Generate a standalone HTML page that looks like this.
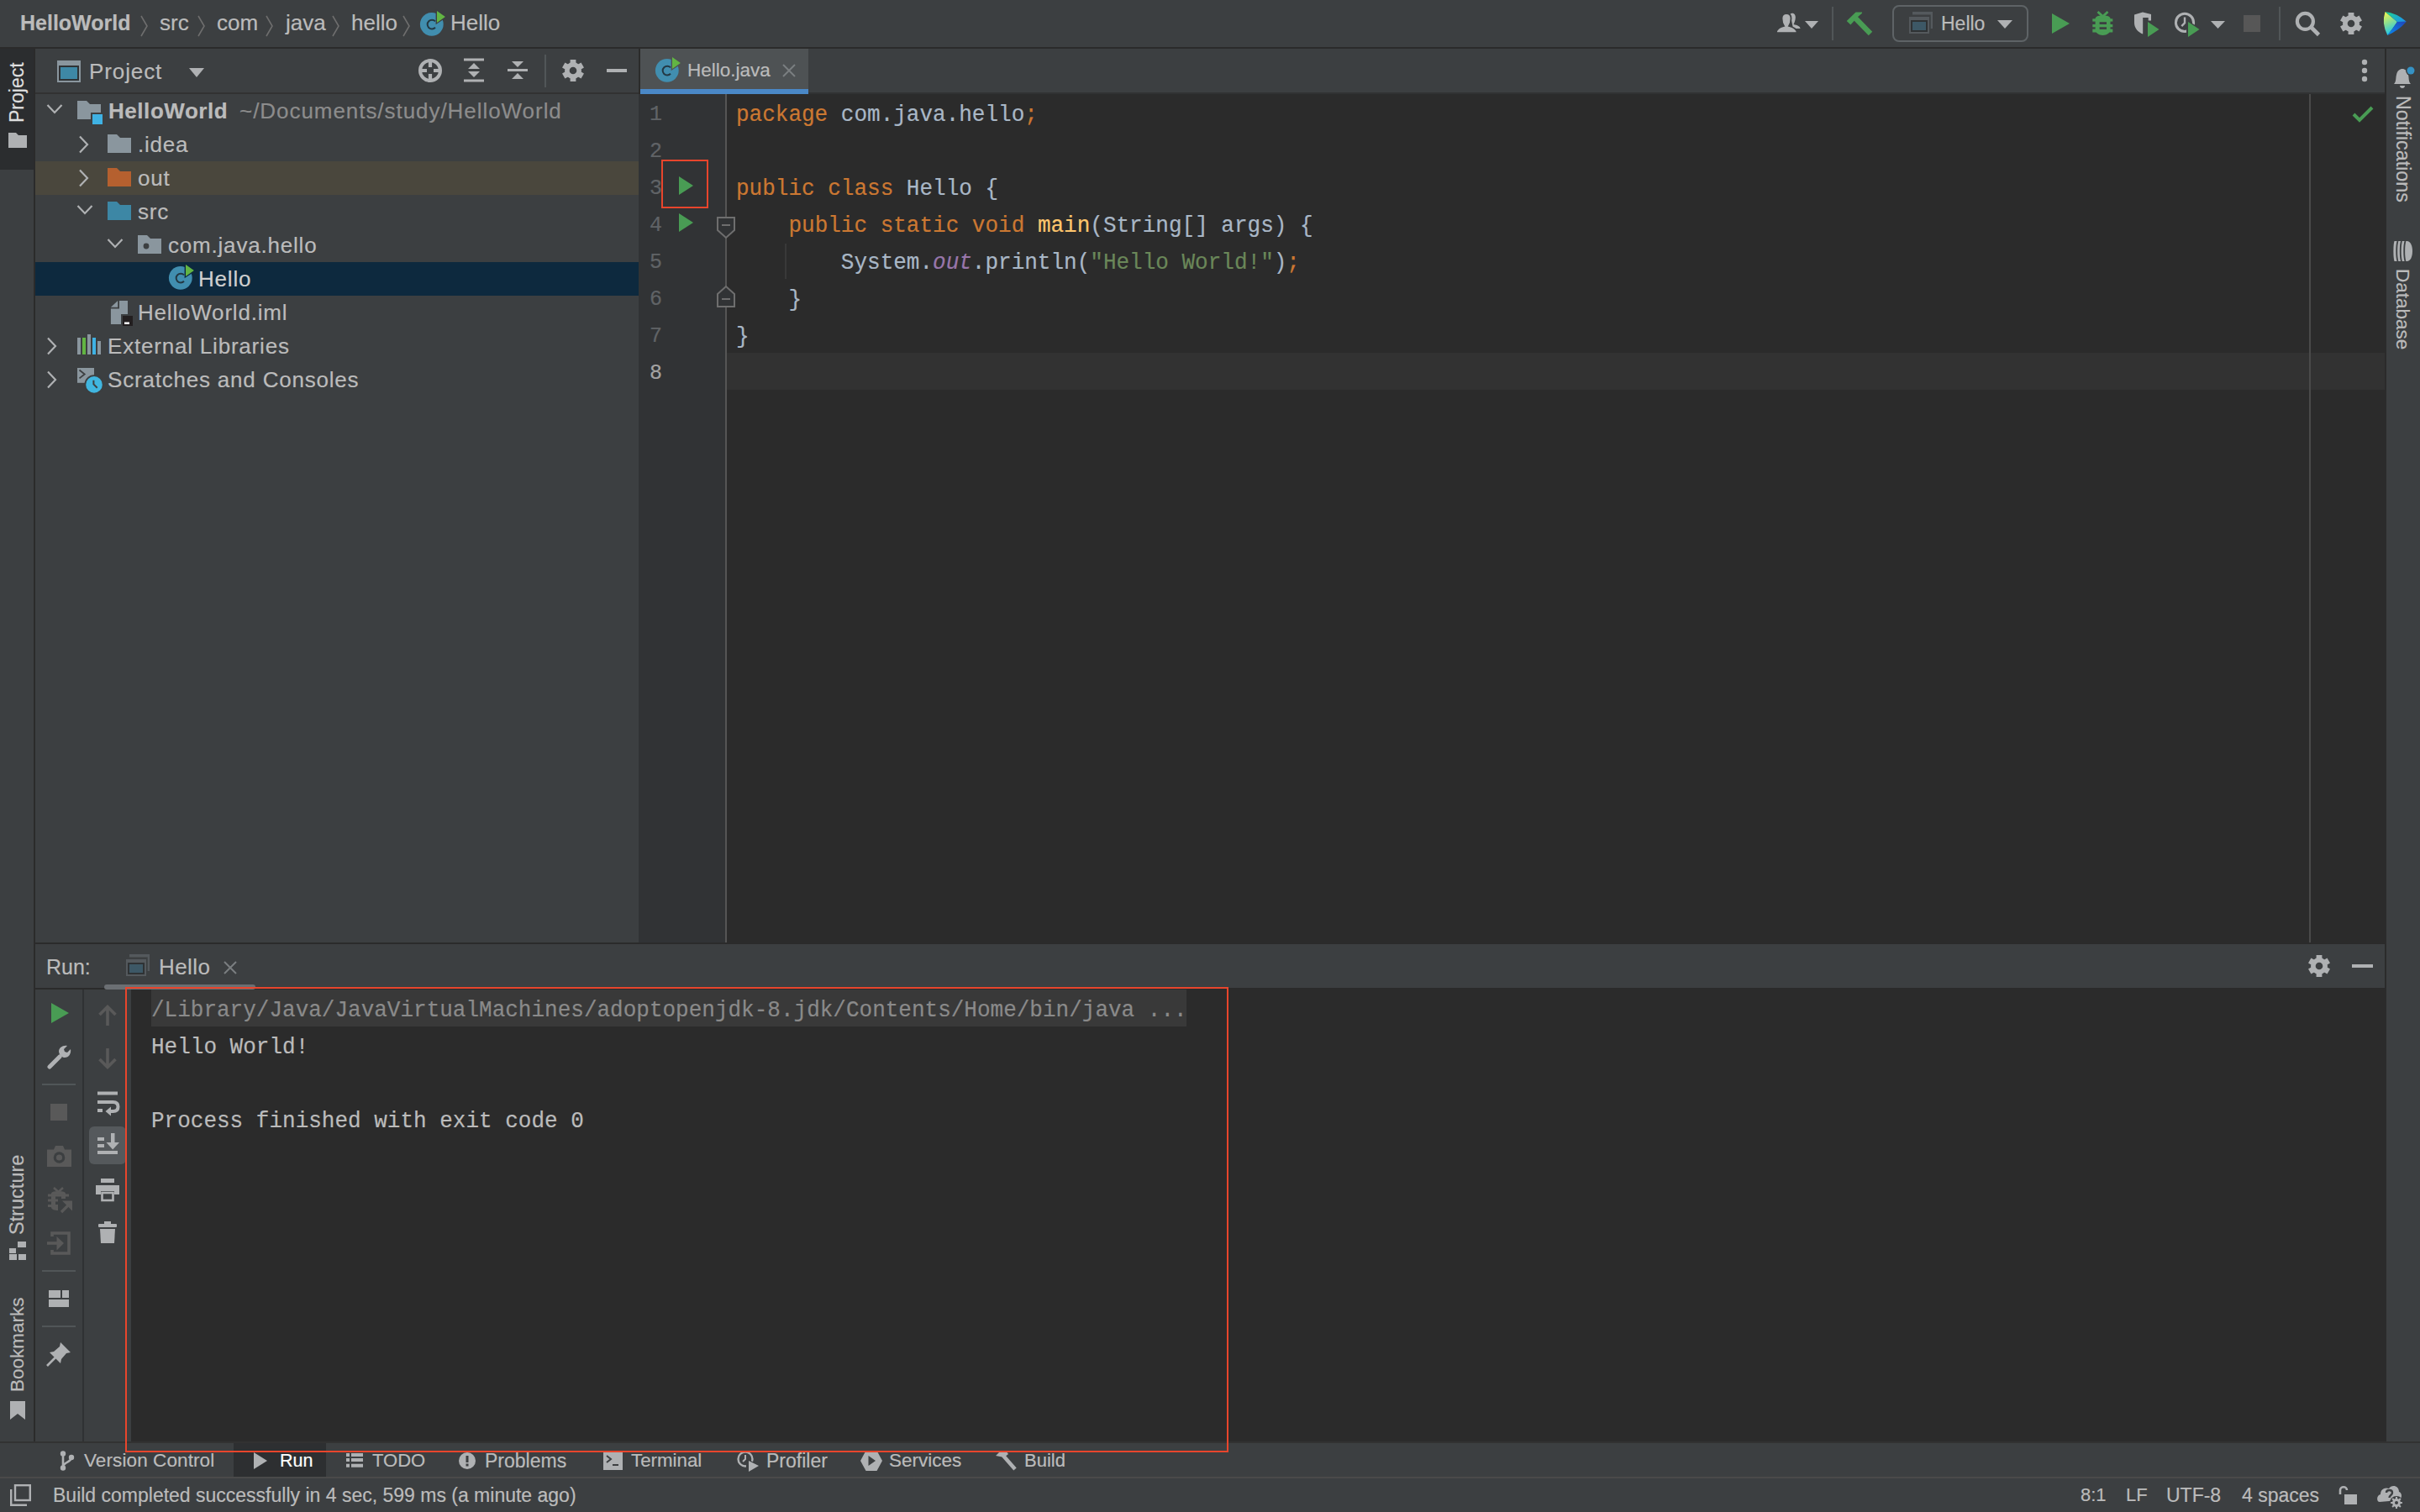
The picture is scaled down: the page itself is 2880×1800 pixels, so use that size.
<!DOCTYPE html>
<html><head><meta charset="utf-8">
<style>
*{margin:0;padding:0;box-sizing:border-box}
html,body{width:2880px;height:1800px;overflow:hidden;background:#3C3F41;font-family:"Liberation Sans",sans-serif;color:#BBBBBB}
.a{position:absolute}
.t{position:absolute;white-space:nowrap;font-size:26px;line-height:40px;-webkit-text-stroke:0.2px currentColor}
.mono{font-family:"Liberation Mono",monospace}
.code{transform:scaleY(1.09);transform-origin:0 28.5px;-webkit-text-stroke:0.2px currentColor}
svg{position:absolute;overflow:visible}
</style></head><body>

<!-- ============ TOP NAV BAR ============ -->
<div class="a" style="left:0;top:0;width:2880px;height:56px;background:#3C3F41"></div>
<div class="a" style="left:0;top:56px;width:2880px;height:2px;background:#2B2B2B"></div>
<div id="nav">
<div class="t" style="left:24px;top:7px;font-size:25px;font-weight:bold;color:#BBBBBB">HelloWorld</div>
<svg style="left:166px;top:18px" width="12" height="26"><path d="M2 1 L9 13 L2 25" fill="none" stroke="#6E6E6E" stroke-width="1.6"/></svg>
<div class="t" style="left:190px;top:7px;font-size:26px">src</div>
<svg style="left:234px;top:18px" width="12" height="26"><path d="M2 1 L9 13 L2 25" fill="none" stroke="#6E6E6E" stroke-width="1.6"/></svg>
<div class="t" style="left:258px;top:7px;font-size:26px">com</div>
<svg style="left:315px;top:18px" width="12" height="26"><path d="M2 1 L9 13 L2 25" fill="none" stroke="#6E6E6E" stroke-width="1.6"/></svg>
<div class="t" style="left:340px;top:7px;font-size:26px">java</div>
<svg style="left:394px;top:18px" width="12" height="26"><path d="M2 1 L9 13 L2 25" fill="none" stroke="#6E6E6E" stroke-width="1.6"/></svg>
<div class="t" style="left:418px;top:7px;font-size:26px">hello</div>
<svg style="left:478px;top:18px" width="12" height="26"><path d="M2 1 L9 13 L2 25" fill="none" stroke="#6E6E6E" stroke-width="1.6"/></svg>
<svg style="left:499px;top:13px" width="32" height="32" viewBox="0 0 32 32"><circle cx="14.8" cy="15.8" r="13.9" fill="#418EAF"/><path d="M19 12.4 A5.4 5.4 0 1 0 19 19.8" fill="none" stroke="#233843" stroke-width="2"/><path d="M19.6 -2.2 L33.4 7 L19.6 16.2 Z" fill="#3C3F41"/><path d="M21 0 L30.9 7 L21 14 Z" fill="#62B543"/></svg>
<div class="t" style="left:536px;top:7px;font-size:26px">Hello</div>
</div>


<!-- person -->
<svg style="left:2110px;top:12px" width="36" height="30" viewBox="0 0 36 30"><path d="M20.5 4.5 C23 2.8 27 4 26.8 9 C26.6 12.5 25.5 15 24.5 17 C29 18 32.5 19.5 32.5 22 H24 Z" fill="#AFB1B3"/><path d="M4 27.2 C4 22 8 20.5 13 19 C11 16 10.5 13 10.5 10 C10.5 6 13 4 16 4 C19 4 21.5 6 21.5 10 C21.5 13 21 16 19 19 C24 20.5 28.5 22 28.5 27.2 Z" fill="#AFB1B3" stroke="#3C3F41" stroke-width="1.8"/></svg>
<svg style="left:2148px;top:25px" width="16" height="10"><path d="M0 0 H16 L8 9 Z" fill="#AFB1B3"/></svg>
<div class="a" style="left:2180px;top:8px;width:2px;height:40px;background:#515658"></div>
<!-- hammer -->
<svg style="left:2195px;top:12px" width="36" height="34" viewBox="0 0 36 34"><path d="M2.7 13 L13.5 2.5 H21 V3.8 L15.5 8.5 L7.4 17.5 Z" fill="#499C54"/><path d="M11.5 8 L31 28" stroke="#499C54" stroke-width="6.2"/></svg>
<!-- combo -->
<div class="a" style="left:2252px;top:6px;width:162px;height:44px;border:2px solid #5E6366;border-radius:8px"></div>
<svg style="left:2272px;top:14px" width="28" height="28" viewBox="0 0 28 28"><rect x="4" y="0" width="24" height="3.5" fill="#54595D"/><rect x="25.7" y="0" width="2.3" height="20" fill="#54595D"/><rect x="0" y="6" width="24" height="20" fill="#54595D"/><rect x="2" y="10" width="20" height="14" fill="#2F3234"/><rect x="4" y="12" width="16" height="10" fill="#3D5866"/></svg>
<div class="t" style="left:2310px;top:8px;font-size:23px;color:#BBBBBB">Hello</div>
<svg style="left:2377px;top:24px" width="18" height="11"><path d="M0 0 H18 L9 10 Z" fill="#AFB1B3"/></svg>
<!-- run -->
<svg style="left:2442px;top:16px" width="22" height="24"><path d="M0 0 L21 12 L0 24 Z" fill="#499C54"/></svg>
<!-- debug -->
<svg style="left:2488px;top:12px" width="30" height="32" viewBox="0 0 30 32"><path d="M8.5 2 L14.5 7.5 L20.5 2" fill="none" stroke="#499C54" stroke-width="2.8"/><path d="M5.6 10.5 C5.6 8 8 6.5 14.5 6.5 C21 6.5 23.5 8 23.5 10.5 V23 C23.5 27 19.5 30 14.5 30 C9.5 30 5.6 27 5.6 23 Z" fill="#499C54"/><rect x="2.3" y="10.3" width="24" height="3.3" fill="#499C54"/><rect x="2.3" y="17" width="24" height="3.3" fill="#499C54"/><rect x="2.3" y="22.6" width="24" height="3.9" fill="#499C54"/><rect x="10.6" y="14.2" width="8.4" height="2.8" fill="#3C3F41"/><rect x="10.6" y="20.3" width="8.4" height="2.6" fill="#3C3F41"/></svg>
<!-- coverage -->
<svg style="left:2538px;top:13px" width="34" height="34" viewBox="0 0 34 34"><path d="M2 4.5 L12 1.5 L22 4 V11.5 H18.7 V8 H12.2 V27.5 C7 25.5 2 21 2 14 Z" fill="#AFB1B3"/><path d="M16 10.5 L34.5 22 L16 33.5 Z" fill="#3C3F41"/><path d="M18 13 L31.5 22 L18 31 Z" fill="#499C54"/></svg>
<!-- profiler -->
<svg style="left:2586px;top:13px" width="34" height="34" viewBox="0 0 34 34"><circle cx="14" cy="13.9" r="10.6" fill="none" stroke="#AFB1B3" stroke-width="3"/><path d="M14 7.5 V14.3 L10.3 18.2" fill="none" stroke="#AFB1B3" stroke-width="2.4"/><path d="M16 10.5 L34.5 22 L16 33.5 Z" fill="#3C3F41"/><path d="M18 13 L31.5 22 L18 31 Z" fill="#499C54"/></svg>
<svg style="left:2631px;top:25px" width="17" height="10"><path d="M0 0 H17 L8.5 9 Z" fill="#AFB1B3"/></svg>
<!-- stop -->
<div class="a" style="left:2670px;top:18px;width:20px;height:20px;background:#575757"></div>
<div class="a" style="left:2712px;top:8px;width:2px;height:40px;background:#515658"></div>
<!-- search -->
<svg style="left:2731px;top:13px" width="32" height="32" viewBox="0 0 32 32"><circle cx="12.4" cy="12.4" r="9.5" fill="none" stroke="#AFB1B3" stroke-width="4.2"/><path d="M19 19 L28.5 28.5" stroke="#AFB1B3" stroke-width="4.6"/></svg>
<svg style="left:2785px;top:15px" width="26" height="26" viewBox="0 0 26 26"><g fill="#AFB1B3"><circle cx="13" cy="13" r="10"/><rect x="9.6" y="0" width="6.8" height="6" transform="rotate(0 13 13)"/><rect x="9.6" y="0" width="6.8" height="6" transform="rotate(60 13 13)"/><rect x="9.6" y="0" width="6.8" height="6" transform="rotate(120 13 13)"/><rect x="9.6" y="0" width="6.8" height="6" transform="rotate(180 13 13)"/><rect x="9.6" y="0" width="6.8" height="6" transform="rotate(240 13 13)"/><rect x="9.6" y="0" width="6.8" height="6" transform="rotate(300 13 13)"/></g><circle cx="13" cy="13" r="4.3" fill="#3C3F41"/></svg>
<!-- jetbrains logo -->
<svg style="left:2835px;top:13px" width="32" height="32" viewBox="0 0 32 32"><defs><linearGradient id="jbL" x1="0" y1="0" x2="0.3" y2="1"><stop offset="0" stop-color="#FCF84A"/><stop offset="0.5" stop-color="#8EE08E"/><stop offset="1" stop-color="#1FC6EA"/></linearGradient><linearGradient id="jbT" x1="0" y1="0" x2="1" y2="0.6"><stop offset="0" stop-color="#21D789"/><stop offset="1" stop-color="#1A98E8"/></linearGradient><linearGradient id="jbB" x1="1" y1="0" x2="0" y2="1"><stop offset="0" stop-color="#2044B8"/><stop offset="1" stop-color="#0A8BF0"/></linearGradient></defs><path d="M3.5 1.1 Q12 8 17.9 13 Q12 22 6.3 28.9 Q-1 15 3.5 1.1 Z" fill="url(#jbL)"/><path d="M3.5 1.1 Q17 2.5 28.8 12.7 L17.9 13 Q12 8 3.5 1.1 Z" fill="url(#jbT)"/><path d="M17.9 13 L28.8 12.7 Q20 23 6.3 28.9 Q12 22 17.9 13 Z" fill="url(#jbB)"/></svg>

<!-- ============ LEFT STRIP ============ -->
<div class="a" style="left:0;top:58px;width:40px;height:1660px;background:#3C3F41"></div>
<div class="a" style="left:0;top:58px;width:40px;height:144px;background:#2B2D2F"></div>
<div class="a" style="left:40px;top:58px;width:2px;height:1660px;background:#2B2B2B"></div>

<!-- ============ PROJECT PANEL ============ -->
<div class="a" style="left:42px;top:58px;width:718px;height:52px;background:#3C3F41"></div>
<div class="a" style="left:42px;top:110px;width:718px;height:2px;background:#323232"></div>
<div class="a" style="left:42px;top:112px;width:718px;height:1010px;background:#3C3F41"></div>
<div class="a" style="left:760px;top:58px;width:2px;height:54px;background:#2B2B2B"></div>


<!-- project header -->
<svg style="left:68px;top:72px" width="28" height="26"><rect x="0" y="0" width="28" height="26" fill="#8A969E"/><rect x="2" y="6" width="24" height="18" fill="#2F3336"/><rect x="4" y="8" width="20" height="14" fill="#3E88A6"/></svg>
<div class="t" style="left:106px;top:65px;letter-spacing:0.9px">Project</div>
<svg style="left:225px;top:81px" width="18" height="12"><path d="M0 0 H18 L9 11 Z" fill="#AFB1B3"/></svg>
<!-- locate -->
<svg style="left:498px;top:70px" width="28" height="28" viewBox="0 0 28 28"><circle cx="14" cy="14" r="12" fill="none" stroke="#AFB1B3" stroke-width="4"/><path d="M14 3 V10 M14 18 V25 M3 14 H10 M18 14 H25" stroke="#AFB1B3" stroke-width="4.2"/></svg>
<!-- expand all -->
<svg style="left:551px;top:69px" width="26" height="29"><path d="M1 2 H25 M1 27 H25" stroke="#AFB1B3" stroke-width="3"/><path d="M13 6 L6 13 H20 Z M13 23 L6 16 H20 Z" fill="#AFB1B3"/></svg>
<!-- collapse all -->
<svg style="left:603px;top:69px" width="26" height="29"><path d="M1 14.5 H25" stroke="#AFB1B3" stroke-width="3"/><path d="M13 11 L6 4 H20 Z M13 18 L6 25 H20 Z" fill="#AFB1B3"/></svg>
<div class="a" style="left:648px;top:65px;width:2px;height:39px;background:#515658"></div>
<svg style="left:669px;top:71px" width="26" height="26" viewBox="0 0 26 26"><g fill="#AFB1B3"><circle cx="13" cy="13" r="10"/><rect x="9.6" y="0" width="6.8" height="6" transform="rotate(0 13 13)"/><rect x="9.6" y="0" width="6.8" height="6" transform="rotate(60 13 13)"/><rect x="9.6" y="0" width="6.8" height="6" transform="rotate(120 13 13)"/><rect x="9.6" y="0" width="6.8" height="6" transform="rotate(180 13 13)"/><rect x="9.6" y="0" width="6.8" height="6" transform="rotate(240 13 13)"/><rect x="9.6" y="0" width="6.8" height="6" transform="rotate(300 13 13)"/></g><circle cx="13" cy="13" r="4.3" fill="#3C3F41"/></svg>
<div class="a" style="left:722px;top:82px;width:24px;height:4px;background:#AFB1B3"></div>

<!-- tree rows -->
<div class="a" style="left:42px;top:192px;width:718px;height:40px;background:#4A473D"></div>
<div class="a" style="left:42px;top:312px;width:718px;height:40px;background:#0D293E"></div>

<svg style="left:55px;top:123px" width="20" height="14"><path d="M1.5 2 L10 11 L18.5 2" fill="none" stroke="#AFB1B3" stroke-width="2.2"/></svg>
<svg style="left:92px;top:120px" width="32" height="30"><path d="M0 0 H11 L15 4 H28 V22 H0 Z" fill="#8A969E"/><rect x="16" y="14" width="16" height="16" fill="#3C3F41"/><rect x="18" y="16" width="12" height="12" fill="#3FB2E4"/></svg>
<div class="t" style="left:129px;top:112px;font-weight:bold;font-size:26px;letter-spacing:0.55px">HelloWorld</div>
<div class="t" style="left:285px;top:112px;color:#8C8C8C;letter-spacing:0.95px">~/Documents/study/HelloWorld</div>

<svg style="left:93px;top:161px" width="14" height="22"><path d="M2 1.5 L11 11 L2 20.5" fill="none" stroke="#AFB1B3" stroke-width="2.2"/></svg>
<svg style="left:128px;top:160px" width="28" height="22"><path d="M0 0 H11 L15 4 H28 V22 H0 Z" fill="#8A969E"/></svg>
<div class="t" style="left:164px;top:152px;letter-spacing:0.8px">.idea</div>

<svg style="left:93px;top:201px" width="14" height="22"><path d="M2 1.5 L11 11 L2 20.5" fill="none" stroke="#AFB1B3" stroke-width="2.2"/></svg>
<svg style="left:128px;top:200px" width="28" height="22"><path d="M0 0 H11 L15 4 H28 V22 H0 Z" fill="#B5602F"/></svg>
<div class="t" style="left:164px;top:192px;letter-spacing:0.8px">out</div>

<svg style="left:91px;top:243px" width="20" height="14"><path d="M1.5 2 L10 11 L18.5 2" fill="none" stroke="#AFB1B3" stroke-width="2.2"/></svg>
<svg style="left:128px;top:240px" width="28" height="22"><path d="M0 0 H11 L15 4 H28 V22 H0 Z" fill="#3D87A5"/></svg>
<div class="t" style="left:164px;top:232px;letter-spacing:0.8px">src</div>

<svg style="left:127px;top:283px" width="20" height="14"><path d="M1.5 2 L10 11 L18.5 2" fill="none" stroke="#AFB1B3" stroke-width="2.2"/></svg>
<svg style="left:164px;top:280px" width="28" height="22"><path d="M0 0 H11 L15 4 H28 V22 H0 Z" fill="#8A969E"/><circle cx="10" cy="13" r="3.4" fill="#3C3F41"/></svg>
<div class="t" style="left:200px;top:272px;letter-spacing:0.8px">com.java.hello</div>

<svg style="left:200px;top:315px" width="32" height="32" viewBox="0 0 32 32"><circle cx="14.8" cy="15.8" r="13.9" fill="#418EAF"/><path d="M19 12.4 A5.4 5.4 0 1 0 19 19.8" fill="none" stroke="#233843" stroke-width="2"/><path d="M19.6 -2.2 L33.4 7 L19.6 16.2 Z" fill="#0D293E"/><path d="M21 0 L30.9 7 L21 14 Z" fill="#62B543"/></svg>
<div class="t" style="left:236px;top:312px;letter-spacing:0.8px;color:#CFCFCF">Hello</div>

<svg style="left:131px;top:357px" width="28" height="32" viewBox="0 0 28 32"><path d="M11 0.9 H21 V17 H13 V29 H0.9 V10.4 H11 Z" fill="#8A969E"/><path d="M0.9 8.7 L9.2 0.9 V8.7 Z" fill="#8A969E"/><rect x="15" y="19" width="12" height="12" fill="#231F20"/><rect x="17" y="26.5" width="6" height="2.5" fill="#FFFFFF"/></svg>
<div class="t" style="left:164px;top:352px;letter-spacing:0.8px">HelloWorld.iml</div>

<svg style="left:55px;top:401px" width="14" height="22"><path d="M2 1.5 L11 11 L2 20.5" fill="none" stroke="#AFB1B3" stroke-width="2.2"/></svg>
<svg style="left:92px;top:398px" width="28" height="24"><rect x="0" y="4" width="4" height="20" fill="#8A969E"/><rect x="6" y="4" width="4" height="20" fill="#62B543"/><rect x="12" y="0" width="4" height="24" fill="#8A969E"/><rect x="18" y="4" width="4" height="20" fill="#3FB2E4"/><rect x="24" y="8" width="4" height="16" fill="#8A969E"/></svg>
<div class="t" style="left:128px;top:392px;letter-spacing:0.8px">External Libraries</div>

<svg style="left:55px;top:441px" width="14" height="22"><path d="M2 1.5 L11 11 L2 20.5" fill="none" stroke="#AFB1B3" stroke-width="2.2"/></svg>
<svg style="left:92px;top:438px" width="32" height="32" viewBox="0 0 32 32"><rect x="0" y="0" width="20" height="17.8" fill="#8A969E"/><path d="M2.5 2.5 L8.7 7.5 L2.5 12.4" fill="none" stroke="#3C3F41" stroke-width="1.8"/><circle cx="20" cy="19.9" r="11.6" fill="#3C3F41"/><circle cx="20" cy="19.9" r="9.8" fill="#40B6E0"/><path d="M19.4 14.8 V19.4 L23.7 23.7" fill="none" stroke="#3C3F41" stroke-width="2"/></svg>
<div class="t" style="left:128px;top:432px;letter-spacing:0.8px">Scratches and Consoles</div>

<!-- ============ EDITOR ============ -->
<div class="a" style="left:762px;top:58px;width:2076px;height:54px;background:#3C3F41"></div>
<div class="a" style="left:760px;top:112px;width:103px;height:1010px;background:#313335"></div>
<div class="a" style="left:863px;top:112px;width:2px;height:1010px;background:#555555"></div>
<div class="a" style="left:865px;top:112px;width:1973px;height:1010px;background:#2B2B2B"></div>


<!-- tab -->
<div class="a" style="left:762px;top:58px;width:200px;height:48px;background:#4E5254"></div>
<div class="a" style="left:762px;top:106px;width:200px;height:6px;background:#4A88C7"></div>
<div class="a" style="left:962px;top:110px;width:1876px;height:2px;background:#313233"></div>
<svg style="left:779px;top:68px" width="32" height="32" viewBox="0 0 32 32"><circle cx="14.8" cy="15.8" r="13.9" fill="#418EAF"/><path d="M19 12.4 A5.4 5.4 0 1 0 19 19.8" fill="none" stroke="#233843" stroke-width="2"/><path d="M19.6 -2.2 L33.4 7 L19.6 16.2 Z" fill="#4E5254"/><path d="M21 0 L30.9 7 L21 14 Z" fill="#62B543"/></svg>
<div class="t" style="left:818px;top:64px;font-size:22.5px;color:#BBBBBB">Hello.java</div>
<svg style="left:931px;top:76px" width="16" height="16"><path d="M1 1 L15 15 M15 1 L1 15" stroke="#7A7E80" stroke-width="2"/></svg>
<!-- 3 dots -->
<svg style="left:2808px;top:70px" width="12" height="28"><circle cx="6" cy="4" r="3.2" fill="#AFB1B3"/><circle cx="6" cy="14" r="3.2" fill="#AFB1B3"/><circle cx="6" cy="24" r="3.2" fill="#AFB1B3"/></svg>
<!-- current line -->
<div class="a" style="left:865px;top:420px;width:1973px;height:44px;background:#323232"></div>
<!-- right margin -->
<div class="a" style="left:2748px;top:112px;width:2px;height:1010px;background:#4A4A4A"></div>
<!-- check -->
<svg style="left:2799px;top:126px" width="26" height="20"><path d="M2 10 L9 17 L24 2" fill="none" stroke="#499C54" stroke-width="4"/></svg>
<!-- line numbers -->
<div class="t mono" style="left:773px;top:114px;width:20px;height:44px;line-height:46px;font-size:25px;color:#606366;text-align:left">1</div>
<div class="t mono" style="left:773px;top:158px;width:20px;height:44px;line-height:46px;font-size:25px;color:#606366;text-align:left">2</div>
<div class="t mono" style="left:773px;top:202px;width:20px;height:44px;line-height:46px;font-size:25px;color:#606366;text-align:left">3</div>
<div class="t mono" style="left:773px;top:246px;width:20px;height:44px;line-height:46px;font-size:25px;color:#606366;text-align:left">4</div>
<div class="t mono" style="left:773px;top:290px;width:20px;height:44px;line-height:46px;font-size:25px;color:#606366;text-align:left">5</div>
<div class="t mono" style="left:773px;top:334px;width:20px;height:44px;line-height:46px;font-size:25px;color:#606366;text-align:left">6</div>
<div class="t mono" style="left:773px;top:378px;width:20px;height:44px;line-height:46px;font-size:25px;color:#606366;text-align:left">7</div>
<div class="t mono" style="left:773px;top:422px;width:20px;height:44px;line-height:46px;font-size:25px;color:#A4A3A3;text-align:left">8</div>

<!-- gutter run icons -->
<svg style="left:808px;top:210px" width="18" height="22"><path d="M0 0 L17 11 L0 22 Z" fill="#499C54"/></svg>
<svg style="left:808px;top:254px" width="18" height="22"><path d="M0 0 L17 11 L0 22 Z" fill="#499C54"/></svg>
<div class="a" style="left:787px;top:190px;width:56px;height:58px;border:2px solid #E8452C"></div>
<!-- fold markers -->
<svg style="left:853px;top:258px" width="22" height="26"><path d="M1 1 H21 V16 L11 25 L1 16 Z" fill="#313335" stroke="#6E6E6E" stroke-width="2"/><path d="M6 10 H16" stroke="#6E6E6E" stroke-width="2"/></svg>
<svg style="left:853px;top:340px" width="22" height="26"><path d="M1 25 H21 V10 L11 1 L1 10 Z" fill="#313335" stroke="#6E6E6E" stroke-width="2"/><path d="M6 16 H16" stroke="#6E6E6E" stroke-width="2"/></svg>
<!-- indent guide -->
<div class="a" style="left:934px;top:290px;width:2px;height:42px;background:#393939"></div>
<!-- code -->
<div class="t mono code" style="left:876px;top:115px;height:44px;line-height:44px;font-size:26px;color:#A9B7C6;white-space:pre"><span style="color:#CC7832">package</span> <span style="color:#A9B7C6">com.java.hello</span><span style="color:#CC7832">;</span></div>
<div class="t mono code" style="left:876px;top:159px;height:44px;line-height:44px;font-size:26px;color:#A9B7C6;white-space:pre"></div>
<div class="t mono code" style="left:876px;top:203px;height:44px;line-height:44px;font-size:26px;color:#A9B7C6;white-space:pre"><span style="color:#CC7832">public class</span> <span style="color:#A9B7C6">Hello {</span></div>
<div class="t mono code" style="left:876px;top:247px;height:44px;line-height:44px;font-size:26px;color:#A9B7C6;white-space:pre">    <span style="color:#CC7832">public static void</span> <span style="color:#FFC66D">main</span><span style="color:#A9B7C6">(String[] args) {</span></div>
<div class="t mono code" style="left:876px;top:291px;height:44px;line-height:44px;font-size:26px;color:#A9B7C6;white-space:pre">        <span style="color:#A9B7C6">System.</span><span style="color:#9876AA;font-style:italic">out</span><span style="color:#A9B7C6">.println(</span><span style="color:#6A8759">"Hello World!"</span><span style="color:#A9B7C6">)</span><span style="color:#CC7832">;</span></div>
<div class="t mono code" style="left:876px;top:335px;height:44px;line-height:44px;font-size:26px;color:#A9B7C6;white-space:pre">    <span style="color:#A9B7C6">}</span></div>
<div class="t mono code" style="left:876px;top:379px;height:44px;line-height:44px;font-size:26px;color:#A9B7C6;white-space:pre"><span style="color:#A9B7C6">}</span></div>
<div class="t mono code" style="left:876px;top:423px;height:44px;line-height:44px;font-size:26px;color:#A9B7C6;white-space:pre"></div>


<!-- ============ RIGHT STRIP ============ -->
<div class="a" style="left:2838px;top:58px;width:2px;height:1660px;background:#2B2B2B"></div>
<div class="a" style="left:2840px;top:58px;width:40px;height:1660px;background:#3C3F41"></div>

<!-- ============ RUN PANEL ============ -->
<div class="a" style="left:42px;top:1122px;width:2796px;height:2px;background:#2B2B2B"></div>
<div class="a" style="left:42px;top:1124px;width:2796px;height:52px;background:#3C3F41"></div>
<div class="a" style="left:42px;top:1176px;width:2796px;height:2px;background:#2B2B2B"></div>
<div class="a" style="left:42px;top:1178px;width:56px;height:538px;background:#3C3F41"></div>
<div class="a" style="left:98px;top:1178px;width:2px;height:538px;background:#2F3133"></div>
<div class="a" style="left:100px;top:1178px;width:56px;height:538px;background:#3C3F41"></div>
<div class="a" style="left:156px;top:1178px;width:2682px;height:538px;background:#2B2B2B"></div>

<!-- ============ BOTTOM BARS ============ -->
<div class="a" style="left:0;top:1716px;width:2880px;height:2px;background:#323232"></div>
<div class="a" style="left:0;top:1718px;width:2880px;height:40px;background:#3C3F41"></div>
<div class="a" style="left:0;top:1758px;width:2880px;height:2px;background:#4A4A4A"></div>
<div class="a" style="left:0;top:1760px;width:2880px;height:40px;background:#3C3F41"></div>


<!-- left strip content -->
<div class="t" style="left:9px;top:146px;font-size:23px;line-height:23px;color:#DFDFDF;transform:rotate(-90deg);transform-origin:0 0">Project</div>
<svg style="left:10px;top:158px" width="22" height="18"><path d="M0 0 H9 L12 3 H22 V18 H0 Z" fill="#AFB1B3"/></svg>
<div class="t" style="left:9px;top:1470px;font-size:23.5px;line-height:23px;color:#BBBBBB;transform:rotate(-90deg);transform-origin:0 0">Structure</div>
<svg style="left:11px;top:1478px" width="20" height="22"><rect x="10" y="0" width="10" height="7" fill="#AFB1B3"/><rect x="0" y="8" width="8" height="6" fill="#AFB1B3"/><rect x="0" y="15" width="9" height="7" fill="#AFB1B3"/><rect x="11" y="15" width="9" height="7" fill="#AFB1B3"/></svg>
<div class="t" style="left:9px;top:1657px;font-size:22.5px;line-height:23px;color:#BBBBBB;transform:rotate(-90deg);transform-origin:0 0">Bookmarks</div>
<svg style="left:12px;top:1668px" width="18" height="22"><path d="M0 0 H18 V22 L9 15 L0 22 Z" fill="#AFB1B3"/></svg>

<!-- right strip content -->
<svg style="left:2846px;top:78px" width="30" height="30" viewBox="0 0 30 30"><path d="M3 22 C6 19 5 14 6 11 C7 6 10 4 13 4 C16 4 19 6 20 11 C21 14 20 19 23 22 Z" fill="#AFB1B3"/><path d="M10 24 C10 28 16 28 16 24 Z" fill="#AFB1B3"/><circle cx="23" cy="6" r="6" fill="#3C3F41"/><circle cx="23" cy="6" r="4.5" fill="#3592C4"/></svg>
<div class="t" style="left:2870.5px;top:114px;font-size:23.3px;line-height:23px;color:#BBBBBB;transform:rotate(90deg);transform-origin:0 0">Notifications</div>
<svg style="left:2848px;top:287px" width="23" height="24" viewBox="0 0 23 24"><path d="M1.5 0 H16.5 C20.5 0 23 5 23 12 C23 19 20.5 24 16.5 24 H1.5 C0 20 0 4 1.5 0 Z" fill="#AFB1B3"/><path d="M5.5 0 C3.8 5 3.8 19 5.5 24 M10 0 C8.3 5 8.3 19 10 24 M14.5 0 C12.8 5 12.8 19 14.5 24" fill="none" stroke="#3C3F41" stroke-width="1.8"/></svg>
<div class="t" style="left:2870.5px;top:320px;font-size:22.5px;line-height:23px;color:#BBBBBB;transform:rotate(90deg);transform-origin:0 0">Database</div>

<!-- run header -->
<div class="t" style="left:55px;top:1131px;font-size:25px;color:#BBBBBB">Run:</div>
<svg style="left:150px;top:1136px" width="28" height="28" viewBox="0 0 28 28"><rect x="4" y="0" width="24" height="3.5" fill="#54595D"/><rect x="25.7" y="0" width="2.3" height="20" fill="#54595D"/><rect x="0" y="6" width="24" height="20" fill="#54595D"/><rect x="2" y="10" width="20" height="14" fill="#2F3234"/><rect x="4" y="12" width="16" height="10" fill="#3D5866"/></svg>
<div class="t" style="left:189px;top:1131px;font-size:26px;letter-spacing:0.4px;color:#BBBBBB">Hello</div>
<svg style="left:266px;top:1144px" width="16" height="16"><path d="M1 1 L15 15 M15 1 L1 15" stroke="#7A7E80" stroke-width="2"/></svg>
<div class="a" style="left:124px;top:1172px;width:180px;height:6px;border-radius:3px;background:#6B6F73"></div>
<svg style="left:2747px;top:1137px" width="26" height="26" viewBox="0 0 26 26"><g fill="#AFB1B3"><circle cx="13" cy="13" r="10"/><rect x="9.6" y="0" width="6.8" height="6" transform="rotate(0 13 13)"/><rect x="9.6" y="0" width="6.8" height="6" transform="rotate(60 13 13)"/><rect x="9.6" y="0" width="6.8" height="6" transform="rotate(120 13 13)"/><rect x="9.6" y="0" width="6.8" height="6" transform="rotate(180 13 13)"/><rect x="9.6" y="0" width="6.8" height="6" transform="rotate(240 13 13)"/><rect x="9.6" y="0" width="6.8" height="6" transform="rotate(300 13 13)"/></g><circle cx="13" cy="13" r="4.3" fill="#3C3F41"/></svg>
<div class="a" style="left:2799px;top:1148px;width:25px;height:4px;background:#AFB1B3"></div>

<!-- console -->
<div class="a" style="left:180px;top:1178px;width:1232px;height:44px;background:#393939"></div>
<div class="t mono code" style="left:180px;top:1181px;line-height:44px;font-size:26px;color:#8A8A8A">/Library/Java/JavaVirtualMachines/adoptopenjdk-8.jdk/Contents/Home/bin/java ...</div>
<div class="t mono code" style="left:180px;top:1225px;line-height:44px;font-size:26px;color:#BBBBBB">Hello World!</div>
<div class="t mono code" style="left:180px;top:1313px;line-height:44px;font-size:26px;color:#BBBBBB">Process finished with exit code 0</div>


<!-- run toolbar col1 -->
<svg style="left:61px;top:1194px" width="22" height="24"><path d="M0 0 L21 12 L0 24 Z" fill="#499C54"/></svg>
<svg style="left:56px;top:1243px" width="30" height="30" viewBox="0 0 30 30"><path d="M3 27 L15 15" stroke="#AFB1B3" stroke-width="5" stroke-linecap="round"/><path d="M14 9 C14 4 19 1 24 2 L20 6 L21 9 L24 10 L28 6 C29 11 26 16 21 16 C18 16 15 14 14 9 Z" fill="#AFB1B3"/></svg>
<div class="a" style="left:50px;top:1290px;width:40px;height:2px;background:#515658"></div>
<div class="a" style="left:60px;top:1314px;width:20px;height:20px;background:#595959"></div>
<svg style="left:56px;top:1364px" width="29" height="25" viewBox="0 0 29 25"><path d="M0 4.5 H8 L10 0 H19 L21 4.5 H29 V25 H0 Z" fill="#595959"/><circle cx="14.5" cy="14" r="6.8" fill="#3C3F41"/><circle cx="14.5" cy="14" r="3.6" fill="#595959"/></svg>
<svg style="left:57px;top:1413px" width="30" height="32" viewBox="0 0 30 32"><path d="M7 1 L12.5 6 L18 1" fill="none" stroke="#595959" stroke-width="2.6"/><path d="M4 8 C4 6 7 5 12.5 5 C18 5 21 6 21 8 V24 C21 27 17 28 12.5 28 C8 28 4 27 4 24 Z" fill="#595959"/><rect x="0" y="8.5" width="25" height="3" fill="#595959"/><rect x="0" y="14.5" width="25" height="3" fill="#595959"/><rect x="0" y="21" width="25" height="3" fill="#595959"/><rect x="9" y="11.5" width="7" height="3" fill="#3C3F41"/><rect x="9" y="17.5" width="7" height="3.5" fill="#3C3F41"/><path d="M12 14 H30 V32 H12 Z" fill="#3C3F41"/><path d="M16 30 L25 21" stroke="#595959" stroke-width="3.2"/><path d="M17 16.5 H29 V28.5 Z" fill="#595959"/></svg>
<svg style="left:56px;top:1466px" width="29" height="29" viewBox="0 0 29 29"><path d="M6 6 V2 H26 V26 H6 V22" fill="none" stroke="#595959" stroke-width="3.6"/><path d="M0 14 H13" stroke="#595959" stroke-width="3.6"/><path d="M11.5 6 L20 14 L11.5 22.5 Z" fill="#595959"/></svg>
<div class="a" style="left:50px;top:1512px;width:40px;height:2px;background:#515658"></div>
<svg style="left:58px;top:1536px" width="24" height="20"><rect x="0" y="0" width="14" height="9" fill="#AFB1B3"/><rect x="16" y="0" width="8" height="9" fill="#AFB1B3"/><rect x="0" y="11" width="24" height="9" fill="#AFB1B3"/></svg>
<div class="a" style="left:50px;top:1578px;width:40px;height:2px;background:#515658"></div>
<svg style="left:55px;top:1597px" width="30" height="30" viewBox="0 0 30 30"><path d="M1 29 L11 19" stroke="#AFB1B3" stroke-width="2.6"/><path d="M17 1 L29 13 L24 14 L18 21 L17 26 L4 13 L9 12 L16 6 Z" fill="#AFB1B3"/></svg>

<!-- run toolbar col2 -->
<svg style="left:117px;top:1196px" width="22" height="26" viewBox="0 0 22 26"><path d="M11 25 V3 M1.5 12 L11 2.5 L20.5 12" fill="none" stroke="#595959" stroke-width="3.6"/></svg>
<svg style="left:117px;top:1248px" width="22" height="26" viewBox="0 0 22 26"><path d="M11 0 V22 M1.5 13 L11 22.5 L20.5 13" fill="none" stroke="#595959" stroke-width="3.6"/></svg>
<svg style="left:115px;top:1299px" width="30" height="30" viewBox="0 0 30 30"><path d="M1 2.5 H25" stroke="#AFB1B3" stroke-width="4"/><path d="M1 13 H19.5 C24 13 25.5 15.5 25.5 18.5 C25.5 21.5 24 24 19.5 24 H15" fill="none" stroke="#AFB1B3" stroke-width="4"/><path d="M1 23 H7" stroke="#AFB1B3" stroke-width="4"/><path d="M17 18.5 L10.5 24 L17 29.5 Z" fill="#AFB1B3"/></svg>
<div class="a" style="left:106px;top:1341px;width:44px;height:45px;border-radius:6px;background:#55595C"></div>
<svg style="left:116px;top:1349px" width="26" height="26" viewBox="0 0 26 26"><path d="M0 7 H8 M0 15 H8 M0 23 H24" fill="none" stroke="#AFB1B3" stroke-width="4"/><rect x="16" y="0" width="4.5" height="12" fill="#AFB1B3"/><path d="M10.5 11 H26 L18.2 19.5 Z" fill="#AFB1B3"/></svg>
<svg style="left:114px;top:1403px" width="28" height="27" viewBox="0 0 28 27"><rect x="6" y="0" width="16" height="5" fill="#AFB1B3"/><path d="M0 8 H28 V19 H22 V15 H6 V19 H0 Z" fill="#AFB1B3"/><rect x="7.5" y="17" width="13" height="9" fill="none" stroke="#AFB1B3" stroke-width="2.6"/></svg>
<svg style="left:117px;top:1454px" width="22" height="26" viewBox="0 0 22 26"><rect x="7" y="0" width="8" height="3" fill="#AFB1B3"/><rect x="0" y="3" width="22" height="4" rx="1" fill="#AFB1B3"/><path d="M2 9 H20 L19 26 H3 Z" fill="#AFB1B3"/></svg>

<!-- bottom tool window bar -->
<div class="a" style="left:278px;top:1718px;width:110px;height:40px;background:#2D2F31"></div>
<svg style="left:71px;top:1727px" width="18" height="24" viewBox="0 0 18 24"><circle cx="4" cy="3.5" r="3.2" fill="#AFB1B3"/><circle cx="4" cy="20.5" r="3.2" fill="#AFB1B3"/><circle cx="14" cy="8" r="3.2" fill="#AFB1B3"/><path d="M4 3 V21 M14 8 C14 14 5 13 4 19" fill="none" stroke="#AFB1B3" stroke-width="2.6"/></svg>
<div class="t" style="left:100px;top:1719px;font-size:22.5px;letter-spacing:0.1px;color:#BBBBBB">Version Control</div>
<svg style="left:302px;top:1729px" width="17" height="20"><path d="M0 0 L16 10 L0 20 Z" fill="#AFB1B3"/></svg>
<div class="t" style="left:333px;top:1719px;font-size:21.5px;color:#FFFFFF">Run</div>
<svg style="left:412px;top:1729px" width="20" height="20" viewBox="0 0 20 20"><path d="M0 3 H4 M0 9 H4 M0 15.7 H4 M6 3 H20 M6 9 H20 M6 15.7 H20" stroke="#AFB1B3" stroke-width="4"/></svg>
<div class="t" style="left:443px;top:1719px;font-size:22px;color:#BBBBBB">TODO</div>
<svg style="left:546px;top:1729px" width="20" height="20" viewBox="0 0 20 20"><circle cx="10" cy="10" r="10" fill="#AFB1B3"/><rect x="8.5" y="4" width="3" height="8" fill="#3C3F41"/><rect x="8.5" y="13.5" width="3" height="3" fill="#3C3F41"/></svg>
<div class="t" style="left:577px;top:1719px;font-size:23px;color:#BBBBBB">Problems</div>
<svg style="left:718px;top:1728px" width="23" height="22" viewBox="0 0 23 22"><rect x="0" y="0" width="23" height="22" fill="#AFB1B3"/><path d="M4 5 L9 9 L4 13" fill="none" stroke="#3C3F41" stroke-width="2"/><path d="M11 16 H18" stroke="#3C3F41" stroke-width="2"/></svg>
<div class="t" style="left:751px;top:1719px;font-size:22.3px;color:#BBBBBB">Terminal</div>
<svg style="left:877px;top:1726px" width="28" height="26" viewBox="0 0 28 26"><circle cx="10" cy="11" r="8.5" fill="none" stroke="#AFB1B3" stroke-width="2.4"/><path d="M10 6 V11 L7 14" fill="none" stroke="#AFB1B3" stroke-width="2"/><path d="M11 10 L28 19 L11 28 Z" fill="#3C3F41"/><path d="M14 13 L26 19 L14 26 Z" fill="#AFB1B3"/></svg>
<div class="t" style="left:912px;top:1719px;font-size:23px;color:#BBBBBB">Profiler</div>
<svg style="left:1024px;top:1727px" width="26" height="24" viewBox="0 0 26 24"><path d="M6.5 0 H19.5 L26 12 L19.5 24 H6.5 L0 12 Z" fill="#AFB1B3"/><path d="M9.5 6 L18 12 L9.5 18 Z" fill="#3C3F41"/></svg>
<div class="t" style="left:1058px;top:1719px;font-size:22.5px;color:#BBBBBB">Services</div>
<svg style="left:1184px;top:1726px" width="26" height="26" viewBox="0 0 26 26"><path d="M1 7 L7 1 L10 3 L13 1 L16 5 L11 9 Z" fill="#AFB1B3"/><path d="M10 7 L24 23" stroke="#AFB1B3" stroke-width="4.5"/></svg>
<div class="t" style="left:1219px;top:1719px;font-size:22px;color:#BBBBBB">Build</div>

<!-- status bar -->
<svg style="left:12px;top:1767px" width="25" height="26" viewBox="0 0 25 26"><rect x="6" y="1.2" width="17.8" height="17.8" fill="none" stroke="#AFB1B3" stroke-width="2.4"/><path d="M1.2 6 V24.8 H20" fill="none" stroke="#AFB1B3" stroke-width="2.4"/></svg>
<div class="t" style="left:63px;top:1760px;font-size:23px;color:#BBBBBB">Build completed successfully in 4 sec, 599 ms (a minute ago)</div>
<div class="t" style="left:2476px;top:1760px;font-size:22px;color:#BBBBBB">8:1</div>
<div class="t" style="left:2530px;top:1760px;font-size:22px;color:#BBBBBB">LF</div>
<div class="t" style="left:2578px;top:1760px;font-size:23px;color:#BBBBBB">UTF-8</div>
<div class="t" style="left:2668px;top:1760px;font-size:23px;color:#BBBBBB">4 spaces</div>
<svg style="left:2782px;top:1768px" width="23" height="23" viewBox="0 0 23 23"><path d="M3 11 V6 C3 1 11 1 11 6" fill="none" stroke="#AFB1B3" stroke-width="2.6"/><rect x="8" y="11" width="15" height="12" fill="#AFB1B3"/></svg>
<svg style="left:2828px;top:1766px" width="34" height="30" viewBox="0 0 34 30"><path d="M4 22 C0 22 0 14 5 13 C5 7 10 4 15 6 C18 1 27 2 27 10 C31 11 31 18 27 20 Z" fill="#AFB1B3"/><path d="M12 11 C12 7 19 7 19 11 C19 14 15.5 14 15.5 17" fill="none" stroke="#3C3F41" stroke-width="2.4"/><circle cx="24" cy="23" r="8" fill="#3C3F41"/><path fill-rule="evenodd" d="M28.88 21.93 L30.92 21.96 L30.92 24.04 L28.88 24.07 L28.21 25.70 L29.63 27.16 L28.16 28.63 L26.70 27.21 L25.07 27.88 L25.04 29.92 L22.96 29.92 L22.93 27.88 L21.30 27.21 L19.84 28.63 L18.37 27.16 L19.79 25.70 L19.12 24.07 L17.08 24.04 L17.08 21.96 L19.12 21.93 L19.79 20.30 L18.37 18.84 L19.84 17.37 L21.30 18.79 L22.93 18.12 L22.96 16.08 L25.04 16.08 L25.07 18.12 L26.70 18.79 L28.16 17.37 L29.63 18.84 L28.21 20.30 Z M26.00 23.00 A2 2 0 1 0 22.00 23.00 A2 2 0 1 0 26.00 23.00 Z" fill="#AFB1B3"/></svg>

<div class="a" style="left:149px;top:1175px;width:1313px;height:554px;border:2px solid #E8452C"></div>
</body></html>
